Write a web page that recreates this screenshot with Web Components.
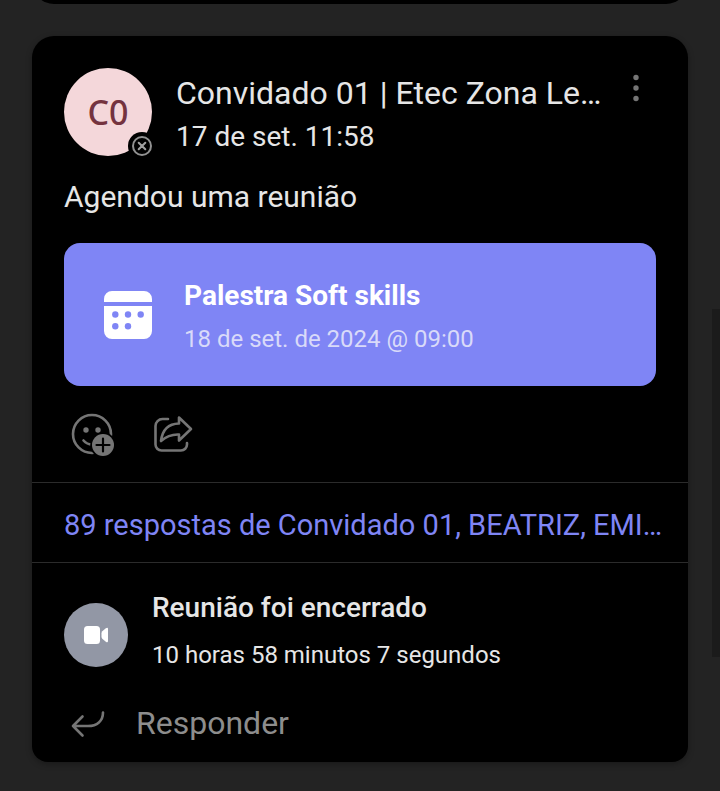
<!DOCTYPE html>
<html lang="pt-BR">
<head>
<meta charset="utf-8">
<meta name="viewport" content="width=device-width, initial-scale=1">
<title>Publicações</title>
<style>
  html { background: #232323; }
  body { margin: 0; font-family: Roboto, "Liberation Sans", sans-serif; color: #e6e6e6; }
</style>
</head>
<body>
<channel-feed>
  <post-card>
    <post-header slot="header" initials="C0">
      <span slot="author">Convidado 01 | Etec Zona Le…</span>
      <span slot="time">17 de set. 11:58</span>
    </post-header>
    <span slot="message">Agendou uma reunião</span>
    <meeting-tile slot="attachment">
      <span slot="title">Palestra Soft skills</span>
      <span slot="when">18 de set. de 2024 @ 09:00</span>
    </meeting-tile>
    <post-actions slot="actions"></post-actions>
    <replies-link slot="replies">89 respostas de Convidado 01, BEATRIZ, EMI…</replies-link>
    <meeting-status slot="status">
      <span slot="title">Reunião foi encerrado</span>
      <span slot="duration">10 horas 58 minutos 7 segundos</span>
    </meeting-status>
    <reply-button slot="reply">Responder</reply-button>
  </post-card>
</channel-feed>

<script>
const define = (name, html) => {
  const template = document.createElement('template');
  template.innerHTML = '<style>*{box-sizing:border-box}button{font:inherit;color:inherit;background:none;border:0;padding:0;margin:0;cursor:pointer}svg{display:block}</style>' + html;
  customElements.define(name, class extends HTMLElement {
    constructor() {
      super();
      this.attachShadow({ mode: 'open' }).append(template.content.cloneNode(true));
    }
    connectedCallback() {
      const initials = this.shadowRoot.querySelector('.initials');
      if (initials) initials.textContent = this.getAttribute('initials');
    }
  });
};

define('channel-feed', `
<style>
  :host { display: block; position: relative; padding: 0 32px 29px; }
  .previous { height: 4px; margin-bottom: 32px; overflow: hidden; display: flex; align-items: flex-end; }
  .previous::before { content: ""; flex: 1; height: 48px; background: #000; border-radius: 22px; }
  .scrollbar { position: absolute; right: 0; top: 309px; width: 8px; height: 348px; background: #1b1b1b; }
</style>
<div class="previous"></div>
<slot></slot>
<div class="scrollbar"></div>`);

define('post-card', `
<style>
  :host { display: block; background: #000; border-radius: 22px 22px 16px 16px; box-shadow: 0 2px 6px rgba(0,0,0,.3); }
  .post { padding: 32px 32px 24px; }
  .message { font-size: 30px; line-height: 40px; margin: 21px 0 26px; }
  .message ::slotted(*) { display: block; }
  .replies { border: solid #2b2b2b; border-width: 1px 0; }
  .thread { padding: 23px 32px 15px; }
</style>
<article>
  <div class="post">
    <slot name="header"></slot>
    <div class="message"><slot name="message"></slot></div>
    <slot name="attachment"></slot>
    <slot name="actions"></slot>
  </div>
  <div class="replies"><slot name="replies"></slot></div>
  <div class="thread">
    <slot name="status"></slot>
    <slot name="reply"></slot>
  </div>
</article>`);

define('post-header', `
<style>
  :host { display: flex; gap: 24px; align-items: flex-start; height: 88px; }
  .avatar { position: relative; flex: none; width: 88px; height: 88px; border-radius: 50%; background: #f4d7da; color: #74333f; display: grid; place-items: center; font: 500 34px/40px "Noto Sans", sans-serif; }
  .presence { position: absolute; right: -4px; bottom: -4px; }
  .lines { flex: 1; min-width: 0; padding-top: 3px; white-space: nowrap; }
  .author { font-size: 32px; line-height: 44px; }
  .time { font-size: 28px; line-height: 44px; }
  .more { flex: none; width: 40px; height: 40px; display: grid; place-items: center; }
  .tail { display: flex; margin-left: -24px; }
</style>
<div class="avatar"><span class="initials"></span>
  <svg class="presence" width="28" height="28" viewBox="0 0 28 28" aria-label="Offline"><circle cx="14" cy="14" r="14"/><circle cx="14" cy="14" r="9" fill="none" stroke="#919191" stroke-width="2"/><path d="M10.7 10.7l6.6 6.6M17.3 10.7l-6.6 6.6" stroke="#a0a0a0" stroke-width="2" stroke-linecap="round"/></svg>
</div>
<div class="lines">
  <div class="author"><slot name="author"></slot></div>
  <div class="time"><slot name="time"></slot></div>
</div>
<div class="tail"><button class="more" aria-label="Mais opções"><svg width="8" height="28" viewBox="0 0 8 28" fill="#757575"><circle cx="4" cy="3.5" r="2.7"/><circle cx="4" cy="14" r="2.7"/><circle cx="4" cy="24.5" r="2.7"/></svg></button></div>`);

define('meeting-tile', `
<style>
  :host { display: block; }
  button { width: 100%; display: flex; align-items: center; gap: 32px; padding: 28px 40px 27px; background: #7f85f5; border-radius: 16px; text-align: left; white-space: nowrap; }
  svg { flex: none; }
  .lines { display: block; padding-bottom: 2px; }
  .title { display: block; font-size: 28px; line-height: 50px; font-weight: 700; color: #fff; }
  .when { display: block; font-size: 24px; line-height: 36px; color: #d9daf9; }
</style>
<button>
  <svg width="48" height="48" viewBox="0 0 48 48"><path fill="#fff" d="M8 0h32a8 8 0 0 1 8 8v3H0V8a8 8 0 0 1 8-8zM0 15h48v25a8 8 0 0 1-8 8H8a8 8 0 0 1-8-8z"/><g fill="#7f85f5"><circle cx="11.3" cy="23.5" r="3.2"/><circle cx="24" cy="23.5" r="3.2"/><circle cx="36.7" cy="23.5" r="3.2"/><circle cx="11.3" cy="35.3" r="3.2"/><circle cx="24" cy="35.3" r="3.2"/></g></svg>
  <span class="lines"><span class="title"><slot name="title"></slot></span><span class="when"><slot name="when"></slot></span></span>
</button>`);

define('post-actions', `
<style>
  :host { display: flex; gap: 32px; margin-top: 24px; padding-left: 4px; }
  button { width: 48px; height: 48px; }
</style>
<button aria-label="Adicionar reação"><svg width="48" height="48" viewBox="0 0 48 48" fill="none" stroke="#757575" stroke-width="2.6" stroke-linecap="round"><circle cx="24" cy="24" r="19"/><g fill="#757575" stroke="none"><circle cx="18" cy="20" r="2.7"/><circle cx="30" cy="20" r="2.7"/></g><path d="M15.5 30.5Q19 34.5 24 34.5"/><circle cx="35" cy="35" r="11.8" fill="#000" stroke="#000" stroke-width="2"/><circle cx="35" cy="35" r="11" fill="#757575" stroke="none"/><path d="M35 28.5v13M28.5 35h13" stroke="#000" stroke-width="2.2"/></svg></button>
<button aria-label="Compartilhar"><svg width="48" height="48" viewBox="0 0 48 48" fill="none" stroke="#757575" stroke-width="2.6" stroke-linecap="round" stroke-linejoin="round"><path d="M20 9h-5.500a7 7 0 0 0-7 7v18.500a6 6 0 0 0 6 6h19.500a6 6 0 0 0 6-6V33"/><path d="M31 7.500L43 19 31 30.500V24.500Q21 24 13 31Q15 14 31 13.500z"/></svg></button>`);

define('replies-link', `
<style>
  :host { display: block; }
  a { display: block; padding: 22px 0 17px 32px; font-size: 29px; line-height: 40px; color: #7f85f5; text-decoration: none; white-space: nowrap; }
</style>
<a href="#respostas"><slot></slot></a>`);

define('meeting-status', `
<style>
  :host { display: flex; gap: 24px; align-items: center; white-space: nowrap; }
  .badge { flex: none; width: 64px; height: 64px; border-radius: 50%; background: #9297a5; display: grid; place-items: center; margin-top: 4px; }
  .title { font-size: 28px; line-height: 44px; font-weight: 500; }
  .duration { font-size: 24px; line-height: 50px; }
</style>
<div class="badge"><svg width="24" height="18" viewBox="0 0 24 18" fill="#fff"><rect width="16" height="18" rx="3.500"/><path d="M17.500 7.200Q17.500 6 18.300 5.200L21.800 2.200Q24 .8 24 3v12q0 2.200-2.200 .8L18.300 12.800Q17.500 12 17.500 10.800z"/></svg></div>
<div><div class="title"><slot name="title"></slot></div><div class="duration"><slot name="duration"></slot></div></div>`);

define('reply-button', `
<style>
  :host { display: block; margin-top: 19px; }
  button { display: flex; align-items: center; gap: 24px; font-size: 32px; line-height: 48px; color: #8d8d8d; width: 100%; text-align: left; }
</style>
<button><svg width="48" height="48" viewBox="0 0 48 48" fill="none" stroke="#757575" stroke-width="2.600" stroke-linecap="round" stroke-linejoin="round"><path d="M39 13.500C39 22 33 27 24 27H9M18.500 17.500L9 27l9.500 9.500"/></svg><slot></slot></button>`);
</script>
</body>
</html>
